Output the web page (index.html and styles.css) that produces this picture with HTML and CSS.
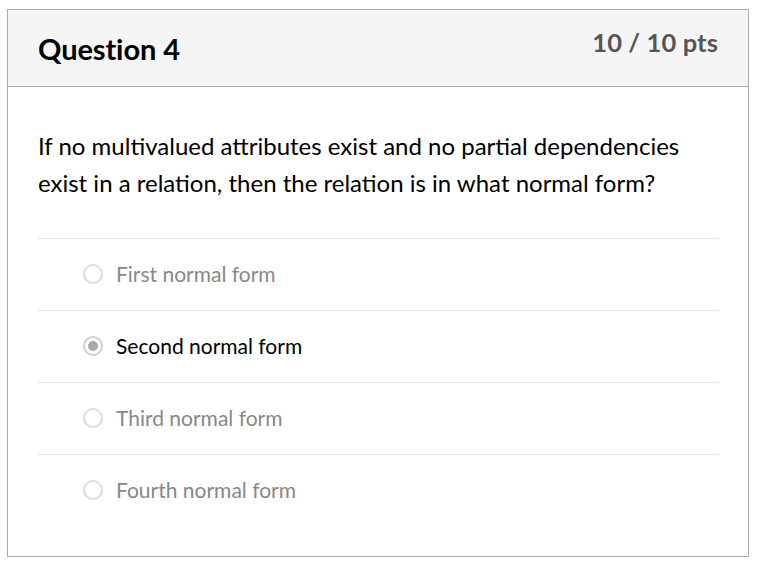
FILE: index.html
```html
<!DOCTYPE html>
<html>
<head>
<meta charset="utf-8">
<link rel="stylesheet" href="styles.css">
</head>
<body>
<div class="card">
  <div class="header">
    <h2 class="title">Question 4</h2>
    <div class="pts">10 / 10 pts</div>
  </div>
  <div class="body">
    <p class="question">If no multivalued attributes exist and no partial dependencies exist in a relation, then the relation is in what normal form?</p>
    <div class="answers">
      <div class="answer"><span class="radio"></span><span class="label">First normal form</span></div>
      <div class="answer selected"><span class="radio"></span><span class="label">Second normal form</span></div>
      <div class="answer"><span class="radio"></span><span class="label">Third normal form</span></div>
      <div class="answer"><span class="radio"></span><span class="label">Fourth normal form</span></div>
    </div>
  </div>
</div>
</body>
</html>
```

FILE: styles.css
```css
* { box-sizing: border-box; }
body {
  margin: 0;
  padding: 9px 0 0 7px;
  font-family: Lato, "Open Sans", sans-serif;
  background: #fff;
  color: #000;
}
.card {
  width: 742px;
  border: 1px solid #aeaeae;
  background: #fff;
}
.header {
  display: flex;
  justify-content: space-between;
  align-items: flex-start;
  background: #f5f5f5;
  border-bottom: 1px solid #aeaeae;
  height: 77px;
  padding: 0 30px;
}
.title {
  margin: 21px 0 0;
  font-size: 29px;
  font-weight: 700;
  color: #000;
  letter-spacing: -0.1px;
}
.pts {
  margin-top: 17px;
  font-size: 25.5px;
  font-weight: 700;
  color: #555;
  letter-spacing: 0.1px;
}
.body {
  padding: 40px 30px 30px;
}
.question {
  margin: 0 0 37px;
  max-width: 650px;
  font-size: 24px;
  line-height: 37px;
  color: #000;
}
.answers {
  display: flex;
  flex-direction: column;
}
.answer {
  display: flex;
  align-items: center;
  gap: 13px;
  height: 72px;
  padding-left: 45px;
  padding-bottom: 2px;
  border-top: 1px solid #e6e6e6;
  font-size: 21px;
  color: #888;
}
.answer.selected { color: #000; }
.radio {
  width: 20px;
  height: 20px;
  border-radius: 50%;
  border: 2px solid #dcdcdc;
  background: #fff;
  display: flex;
  align-items: center;
  justify-content: center;
}
.answer.selected .radio {
  border-color: #cfcfcf;
}
.answer.selected .radio::after {
  content: "";
  width: 10px;
  height: 10px;
  border-radius: 50%;
  background: #a8a8a8;
}
```
